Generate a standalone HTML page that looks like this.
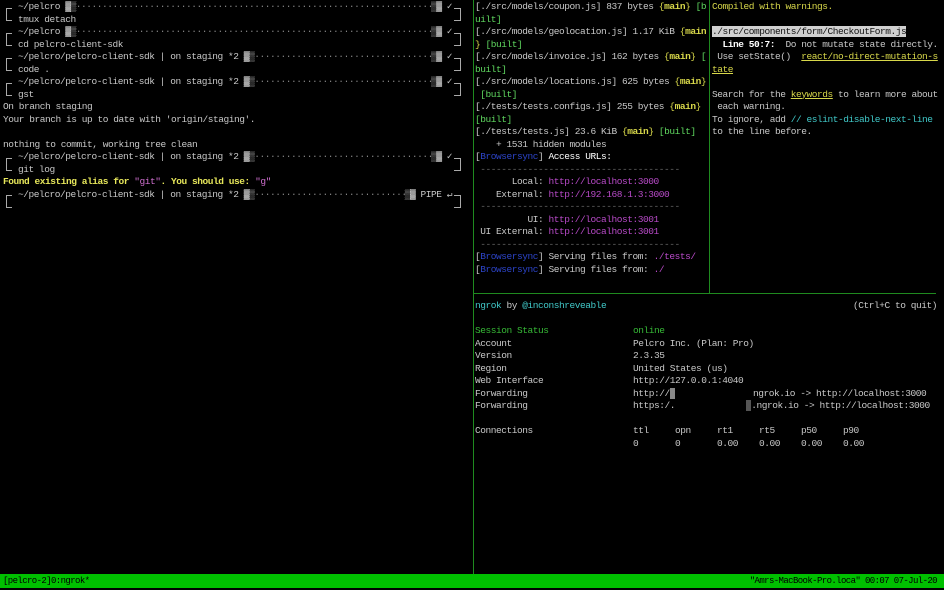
<!DOCTYPE html>
<html><head><meta charset="utf-8"><style>
body{margin:0;background:#000;width:944px;height:590px;overflow:hidden;position:relative;font-family:"Liberation Mono","DejaVu Sans Mono",monospace;font-size:9.5px;letter-spacing:-0.45px;color:#c8c8c8}
.r{position:absolute;white-space:pre;line-height:12.5px;height:12.5px}
.p{display:flex;left:18px;width:434px}
.p .d{flex:1;overflow:hidden;color:#888}
.bl{position:absolute;left:6px;width:5px;height:11px;border:1px solid #aaa;border-right:none}
.br{position:absolute;left:454px;width:6px;height:11px;border:1px solid #aaa;border-left:none}
.y{color:#d8d84a}.yb{color:#e6e65a;font-weight:bold}.m{color:#d070d0}.g{color:#5fd75f}.b{color:#2c44c8}.u{color:#b84ac8}.c{color:#40c8c8}.gn{color:#36b836}.w{color:#fff}
.ul{text-decoration:underline}
.line{position:absolute;background:#1f8a1f}
</style></head><body>
<div class="line" style="left:473px;top:0;width:1px;height:574px"></div>
<div class="line" style="left:709px;top:0;width:1px;height:293px"></div>
<div class="line" style="left:474px;top:293px;width:462px;height:1px"></div>

<div class="bl" style="top:8px"></div><div class="br" style="top:8px"></div>
<div class="r p" style="top:1px"><span>~/pelcro ▓▒</span><span class="d">··································································································</span><span>▒▓ ✓</span></div>
<div class="r" style="top:13.5px;left:18px">tmux detach</div>
<div class="bl" style="top:33px"></div><div class="br" style="top:33px"></div>
<div class="r p" style="top:26px"><span>~/pelcro ▓▒</span><span class="d">··································································································</span><span>▒▓ ✓</span></div>
<div class="r" style="top:38.5px;left:18px">cd pelcro-client-sdk</div>
<div class="bl" style="top:58px"></div><div class="br" style="top:58px"></div>
<div class="r p" style="top:51px"><span>~/pelcro/pelcro-client-sdk | on staging *2 ▓▒</span><span class="d">··································································································</span><span>▒▓ ✓</span></div>
<div class="r" style="top:63.5px;left:18px">code .</div>
<div class="bl" style="top:83px"></div><div class="br" style="top:83px"></div>
<div class="r p" style="top:76px"><span>~/pelcro/pelcro-client-sdk | on staging *2 ▓▒</span><span class="d">··································································································</span><span>▒▓ ✓</span></div>
<div class="r" style="top:88.5px;left:18px">gst</div>
<div class="r" style="top:101px;left:3px">On branch staging</div>
<div class="r" style="top:113.5px;left:3px">Your branch is up to date with 'origin/staging'.</div>
<div class="r" style="top:138.5px;left:3px">nothing to commit, working tree clean</div>
<div class="bl" style="top:158px"></div><div class="br" style="top:158px"></div>
<div class="r p" style="top:151px"><span>~/pelcro/pelcro-client-sdk | on staging *2 ▓▒</span><span class="d">··································································································</span><span>▒▓ ✓</span></div>
<div class="r" style="top:163.5px;left:18px">git log</div>
<div class="r" style="top:176px;left:3px"><span class="yb">Found existing alias for </span><span class="m">"git"</span><span class="yb">. You should use: </span><span class="m">"g"</span></div>
<div class="bl" style="top:195px"></div><div class="br" style="top:195px"></div>
<div class="r p" style="top:188.5px"><span>~/pelcro/pelcro-client-sdk | on staging *2 ▓▒</span><span class="d">··································································································</span><span>▒▓ PIPE ↵</span></div>

<div class="r" style="top:1px;left:475px">[./src/models/coupon.js] 837 bytes <span class="y">{<b>main</b>}</span> <span class="g">[b</span></div>
<div class="r" style="top:13.5px;left:475px"><span class="g">uilt]</span></div>
<div class="r" style="top:26px;left:475px">[./src/models/geolocation.js] 1.17 KiB <span class="y">{<b>main</b></span></div>
<div class="r" style="top:38.5px;left:475px"><span class="y">}</span> <span class="g">[built]</span></div>
<div class="r" style="top:51px;left:475px">[./src/models/invoice.js] 162 bytes <span class="y">{<b>main</b>}</span> <span class="g">[</span></div>
<div class="r" style="top:63.5px;left:475px"><span class="g">built]</span></div>
<div class="r" style="top:76px;left:475px">[./src/models/locations.js] 625 bytes <span class="y">{<b>main</b>}</span></div>
<div class="r" style="top:88.5px;left:475px"> <span class="g">[built]</span></div>
<div class="r" style="top:101px;left:475px">[./tests/tests.configs.js] 255 bytes <span class="y">{<b>main</b>}</span></div>
<div class="r" style="top:113.5px;left:475px"><span class="g">[built]</span></div>
<div class="r" style="top:126px;left:475px">[./tests/tests.js] 23.6 KiB <span class="y">{<b>main</b>}</span> <span class="g">[built]</span></div>
<div class="r" style="top:138.5px;left:475px">    + 1531 hidden modules</div>
<div class="r" style="top:151px;left:475px">[<span class="b">Browsersync</span>] <span class="w">Access URLs:</span></div>
<div class="r" style="top:163.5px;left:475px"> <span style="color:#666">--------------------------------------</span></div>
<div class="r" style="top:176px;left:475px">       Local: <span class="u">http://localhost:3000</span></div>
<div class="r" style="top:188.5px;left:475px">    External: <span class="u">http://192.168.1.3:3000</span></div>
<div class="r" style="top:201px;left:475px"> <span style="color:#666">--------------------------------------</span></div>
<div class="r" style="top:213.5px;left:475px">          UI: <span class="u">http://localhost:3001</span></div>
<div class="r" style="top:226px;left:475px"> UI External: <span class="u">http://localhost:3001</span></div>
<div class="r" style="top:238.5px;left:475px"> <span style="color:#666">--------------------------------------</span></div>
<div class="r" style="top:251px;left:475px">[<span class="b">Browsersync</span>] Serving files from: <span class="u">./tests/</span></div>
<div class="r" style="top:263.5px;left:475px">[<span class="b">Browsersync</span>] Serving files from: <span class="u">./</span></div>

<div class="r y" style="top:1px;left:712px">Compiled with warnings.</div>
<div class="r" style="top:26px;left:712px"><span style="background:#d0d0d0;color:#111">./src/components/form/CheckoutForm.js</span></div>
<div class="r" style="top:38.5px;left:712px">  <span class="w" style="font-weight:bold">Line 50:7:</span>  Do not mutate state directly.</div>
<div class="r" style="top:51px;left:712px"> Use setState()  <span class="y ul">react/no-direct-mutation-s</span></div>
<div class="r" style="top:63.5px;left:712px"><span class="y ul">tate</span></div>
<div class="r" style="top:88.5px;left:712px">Search for the <span class="y ul">keywords</span> to learn more about</div>
<div class="r" style="top:101px;left:712px"> each warning.</div>
<div class="r" style="top:113.5px;left:712px">To ignore, add <span class="c">// eslint-disable-next-line</span></div>
<div class="r" style="top:126px;left:712px">to the line before.</div>

<div class="r" style="top:300px;left:475px"><span class="c">ngrok</span> by <span class="c">@inconshreveable</span></div>
<div class="r" style="top:300px;left:853px">(Ctrl+C to quit)</div>
<div class="r gn" style="top:325px;left:475px">Session Status</div><div class="r gn" style="top:325px;left:633px">online</div>
<div class="r" style="top:337.5px;left:475px">Account</div><div class="r" style="top:337.5px;left:633px">Pelcro Inc. (Plan: Pro)</div>
<div class="r" style="top:350px;left:475px">Version</div><div class="r" style="top:350px;left:633px">2.3.35</div>
<div class="r" style="top:362.5px;left:475px">Region</div><div class="r" style="top:362.5px;left:633px">United States (us)</div>
<div class="r" style="top:375px;left:475px">Web Interface</div><div class="r" style="top:375px;left:633px">http://127.0.0.1:4040</div>
<div class="r" style="top:387.5px;left:475px">Forwarding</div><div class="r" style="top:387.5px;left:633px">http://<span style="background:#888"> </span></div><div class="r" style="top:387.5px;left:753px">ngrok.io -&gt; http://localhost:3000</div>
<div class="r" style="top:400px;left:475px">Forwarding</div><div class="r" style="top:400px;left:633px">https:/.</div><div class="r" style="top:400px;left:746px"><span style="background:#555"> </span>.ngrok.io -&gt; http://localhost:3000</div>
<div class="r" style="top:425px;left:475px">Connections</div>
<div class="r" style="top:425px;left:633px">ttl     opn     rt1     rt5     p50     p90</div>
<div class="r" style="top:437.5px;left:633px">0       0       0.00    0.00    0.00    0.00</div>

<div style="position:absolute;left:0;top:574px;width:944px;height:14px;background:#00c000"></div>
<div class="r" style="top:575px;left:3px;color:#000;font-size:9px;letter-spacing:-0.6px;line-height:12px">[pelcro-2]0:ngrok*</div>
<div class="r" style="top:575px;right:7px;color:#000;font-size:9px;letter-spacing:-0.6px;line-height:12px">"Amrs-MacBook-Pro.loca" 00:07 07-Jul-20</div>
</body></html>
